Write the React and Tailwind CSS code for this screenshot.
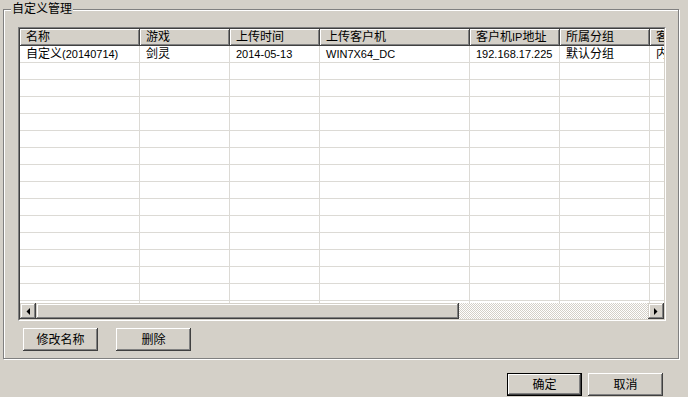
import React from "react";

const cols = [
  { w: 120, h: "名称", v: <>自定义<span className="text-[11px]">(20140714)</span></> },
  { w: 90, h: "游戏", v: "剑灵" },
  { w: 90, h: "上传时间", v: <span className="text-[11px]">2014-05-13</span> },
  { w: 150, h: "上传客户机", v: <span className="text-[11px]">WIN7X64_DC</span> },
  { w: 90, h: <>客户机<span className="text-[11px]">IP</span>地址</>, v: <span className="text-[11px]">192.168.17.225</span> },
  { w: 90, h: "所属分组", v: "默认分组" },
  { w: 90, h: "客户机类型", v: "内网" },
];

const raised =
  "shadow-[inset_-1px_-1px_#404040,inset_1px_1px_#ffffff,inset_-2px_-2px_#808080]";
const sbRaised =
  "shadow-[inset_-1px_-1px_#404040,inset_1px_1px_#d4d0c8,inset_-2px_-2px_#808080,inset_2px_2px_#ffffff]";

function Btn({ children, def }) {
  return (
    <div
      className={
        "w-[75px] h-[23px] flex items-center justify-center text-[12px] text-black bg-[#d4d0c8] " +
        (def ? "border border-black " : "") +
        raised
      }
    >
      {children}
    </div>
  );
}

export default function App() {
  return (
    <div
      className="w-[688px] h-[397px] bg-[#d4d0c8] overflow-hidden pt-[9px] pl-[3px] text-black"
      style={{ fontFamily: '"Liberation Sans","Noto Sans CJK SC",sans-serif' }}
    >
      <div className="relative w-[676px] h-[350px] border border-[#808080] shadow-[inset_1px_1px_#ffffff,1px_1px_#ffffff] pt-[17px] pl-[14px]">
        <span className="absolute left-[7px] top-[-8px] bg-[#d4d0c8] px-[1px] leading-[14px] text-[12px]">
          自定义管理
        </span>
        {/* list view */}
        <div className="w-[648px] h-[294px] border border-t-[#808080] border-l-[#808080] border-r-white border-b-white">
          <div className="w-[646px] h-[292px] border border-t-[#404040] border-l-[#404040] border-r-[#d4d0c8] border-b-[#d4d0c8] bg-white flex flex-col overflow-hidden">
            {/* header */}
            <div className="flex h-[17px] shrink-0">
              {cols.map((c, i) => (
                <div
                  key={i}
                  style={{ width: c.w }}
                  className="shrink-0 h-[17px] bg-[#d4d0c8] border-r border-b border-[#404040] shadow-[inset_1px_1px_#ffffff,inset_-1px_-1px_#808080] pl-[6px] text-[12px] leading-[16px] whitespace-nowrap overflow-hidden"
                >
                  {c.h}
                </div>
              ))}
            </div>
            {/* rows */}
            <div className="flex-1 overflow-hidden">
              {Array.from({ length: 16 }).map((_, r) => (
                <div key={r} className="flex h-[17px]">
                  {cols.map((c, i) => (
                    <div
                      key={i}
                      style={{ width: c.w }}
                      className="shrink-0 h-[17px] border-r border-b border-[#dcdad5] pl-[6px] text-[12px] leading-[16px] whitespace-nowrap overflow-hidden"
                    >
                      {r === 0 ? c.v : null}
                    </div>
                  ))}
                </div>
              ))}
            </div>
            {/* horizontal scrollbar */}
            <div className="flex h-[16px] shrink-0">
              <div className={"w-[16px] h-[16px] bg-[#d4d0c8] flex items-center justify-center " + sbRaised}>
                <svg width="4" height="7" viewBox="0 0 4 7">
                  <path d="M4 0 L4 7 L0.5 3.5 Z" fill="#000" />
                </svg>
              </div>
              <div className={"w-[423px] h-[16px] bg-[#d4d0c8] " + sbRaised} />
              <div className="flex-1 h-[16px] bg-[image:repeating-conic-gradient(#ffffff_0_25%,#d4d0c8_0_50%)] bg-[length:2px_2px]" />
              <div className={"w-[16px] h-[16px] bg-[#d4d0c8] flex items-center justify-center " + sbRaised}>
                <svg width="4" height="7" viewBox="0 0 4 7">
                  <path d="M0 0 L0 7 L3.5 3.5 Z" fill="#000" />
                </svg>
              </div>
            </div>
          </div>
        </div>
        {/* buttons */}
        <div className="flex gap-[18px] mt-[7px] ml-[5px]">
          <Btn>修改名称</Btn>
          <Btn>删除</Btn>
        </div>
      </div>
      <div className="flex gap-[6px] ml-[504px] mt-[14px]">
        <Btn def>确定</Btn>
        <Btn>取消</Btn>
      </div>
    </div>
  );
}
